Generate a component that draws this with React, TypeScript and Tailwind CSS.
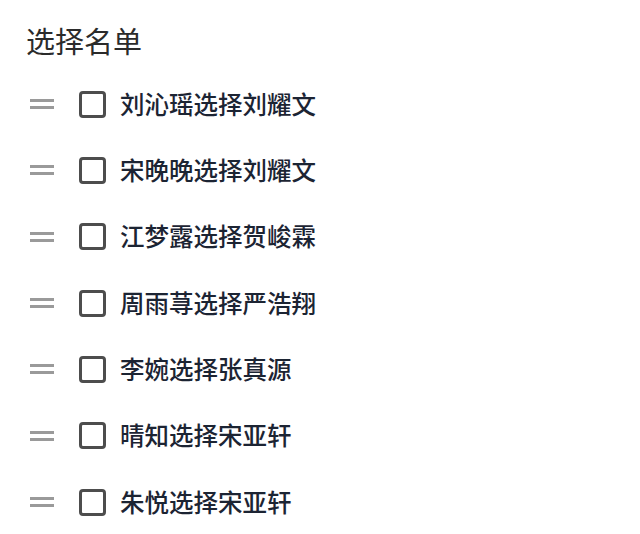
import React from 'react'

const items = [
  '刘沁瑶选择刘耀文',
  '宋晚晚选择刘耀文',
  '江梦露选择贺峻霖',
  '周雨荨选择严浩翔',
  '李婉选择张真源',
  '晴知选择宋亚轩',
  '朱悦选择宋亚轩',
]

function DragHandle() {
  return (
    <div className="flex w-6 flex-col gap-1">
      <div className="h-[3px] w-full bg-[#9a9a9a]" />
      <div className="h-[3px] w-full bg-[#9a9a9a]" />
    </div>
  )
}

export default function App() {
  return (
    <div
      className="min-h-[534px] w-[640px] bg-white"
      style={{ fontFamily: '"Noto Sans CJK SC", "Noto Sans", sans-serif' }}
    >
      <div className="px-[26px] pt-5">
        <h1 className="h-10 text-[29px] leading-10 font-normal text-[#2b2b2b]">选择名单</h1>
        <ul className="mt-[11px]">
          {items.map((name) => (
            <li key={name} className="flex h-[66.33px] items-center">
              <div className="ml-[4px]">
                <DragHandle />
              </div>
              <div className="ml-[25px] h-[27px] w-[27px] rounded-[4px] border-[3px] border-[#4d4d4d]" />
              <span className="ml-[14px] text-[24.5px] font-medium text-[#1c2433]">{name}</span>
            </li>
          ))}
        </ul>
      </div>
    </div>
  )
}
